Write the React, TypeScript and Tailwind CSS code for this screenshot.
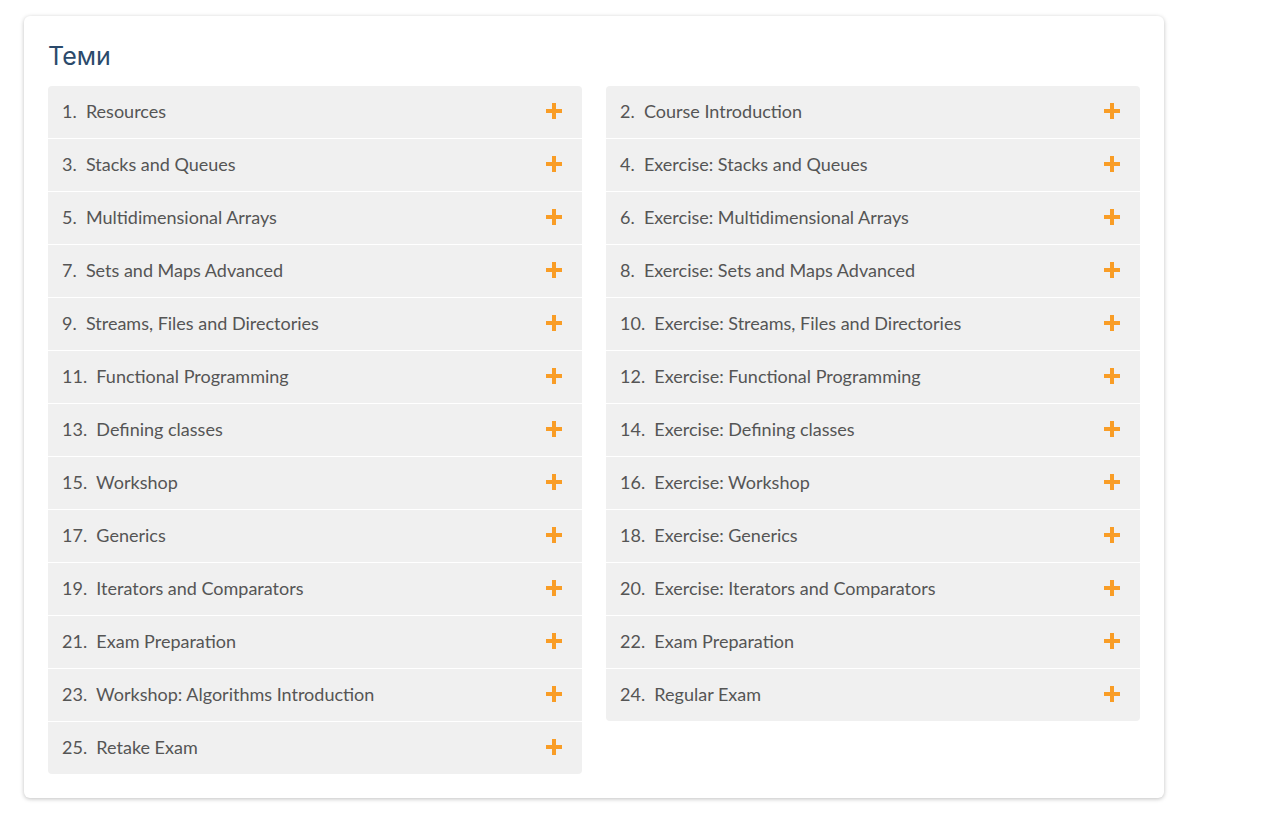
import React from "react"

const left = [
    "1.  Resources",
    "3.  Stacks and Queues",
    "5.  Multidimensional Arrays",
    "7.  Sets and Maps Advanced",
    "9.  Streams, Files and Directories",
    "11.  Functional Programming",
    "13.  Defining classes",
    "15.  Workshop",
    "17.  Generics",
    "19.  Iterators and Comparators",
    "21.  Exam Preparation",
    "23.  Workshop: Algorithms Introduction",
    "25.  Retake Exam",
]

const right = [
    "2.  Course Introduction",
    "4.  Exercise: Stacks and Queues",
    "6.  Exercise: Multidimensional Arrays",
    "8.  Exercise: Sets and Maps Advanced",
    "10.  Exercise: Streams, Files and Directories",
    "12.  Exercise: Functional Programming",
    "14.  Exercise: Defining classes",
    "16.  Exercise: Workshop",
    "18.  Exercise: Generics",
    "20.  Exercise: Iterators and Comparators",
    "22.  Exam Preparation",
    "24.  Regular Exam",
]

const Plus = () => (
    <svg width="16" height="16" viewBox="0 0 16 16">
        <rect x="6" y="0" width="4" height="16" fill="#f99d26" />
        <rect x="0" y="6" width="16" height="4" fill="#f99d26" />
    </svg>
)

const Column = ({ items }: { items: string[] }) => {
    return (
        <div className="flex flex-col gap-px rounded-[4px] overflow-hidden">
            {items.map((t) => (
                <div key={t} className="h-[52px] bg-[#f0f0f0] flex items-center justify-between pl-[14px] pr-[20px] pb-[2px] cursor-pointer">
                    <span className="text-[18px] leading-[24px] text-[#555555] whitespace-pre">{t}</span>
                    <Plus />
                </div>
            ))}
        </div>
    )
}

const App = () => {
    return (
        <div className="bg-white min-h-screen pt-[16px] pl-[24px]" style={{ fontFamily: "Lato, 'Open Sans', sans-serif" }}>
            <div className="w-[1140px] bg-white rounded-[6px] shadow-[0_1px_4px_rgba(0,0,0,0.25)] px-[24px] pt-[24px] pb-[24px]">
                <h2 className="text-[25px] text-[#2b4a6b] leading-[32px] mb-[14px] font-normal" style={{ fontFamily: "Inter, 'Open Sans', sans-serif" }}>Теми</h2>
                <div className="grid grid-cols-2 gap-x-[24px] items-start">
                    <Column items={left} />
                    <Column items={right} />
                </div>
            </div>
        </div>
    )
}

export default App
